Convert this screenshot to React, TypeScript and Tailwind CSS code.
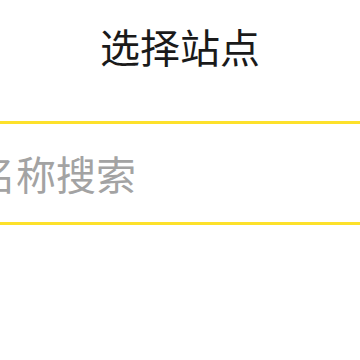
export default function App() {
  return (
    <div
      className="w-[360px] h-[360px] overflow-hidden bg-white"
      style={{ fontFamily: '"Noto Sans CJK SC", "Noto Sans", sans-serif' }}
    >
      <div className="flex h-[92px] items-center justify-center">
        <h1 className="text-[40px] leading-none font-normal text-[#1a1a1a]">选择站点</h1>
      </div>
      <div className="mt-[29px] -mx-[10px] flex h-[104px] items-center overflow-hidden border-y-[3px] border-[#fde12a]">
        <input
          type="text"
          placeholder="站点名称搜索"
          className="ml-[-94px] w-[480px] bg-transparent text-[40px] leading-none text-[#222] outline-none placeholder:text-[#a3a3a3]"
        />
      </div>
    </div>
  );
}
